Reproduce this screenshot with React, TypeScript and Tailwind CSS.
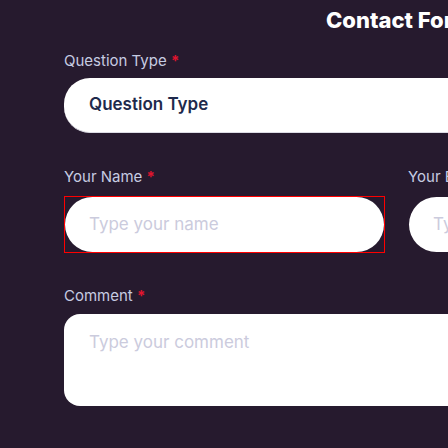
import React from 'react';

const Label: React.FC<{ text: string }> = ({ text }) => (
  <label className="block h-[20px] text-[15px] leading-5 text-[#c6cce2]">
    {text} <span className="font-bold text-[#e0142e]">*</span>
  </label>
);

const PillInput: React.FC<{ placeholder: string }> = ({ placeholder }) => (
  <div className="h-[55px] rounded-full bg-white flex items-center pl-[24px]">
    <span className="text-[17px] text-[#cbcbdd] whitespace-nowrap">{placeholder}</span>
  </div>
);

export default function App() {
  return (
    <div className="w-[448px] h-[448px] overflow-hidden bg-[#261a2e] font-['Inter',sans-serif]">
      <div className="w-[900px] pl-[64px]">
        <div className="h-[51px] pl-[262px] pt-[8px]">
          <h1 className="text-[22px] leading-[25px] font-extrabold text-white whitespace-nowrap">
            Contact Form
          </h1>
        </div>

        <div>
          <Label text="Question Type" />
          <div className="mt-[7px] h-[55px] rounded-[26px] bg-white border-b border-[#dcdce4] flex items-center pl-[25px]">
            <span className="text-[17px] font-semibold text-[#1e2a4c]">Question Type</span>
          </div>
        </div>

        <div className="mt-[34px] flex gap-[23px]">
          <div className="w-[321px]">
            <Label text="Your Name" />
            <div className="mt-[9px] border border-[#ff0000]">
              <PillInput placeholder="Type your name" />
            </div>
          </div>
          <div className="w-[321px]">
            <Label text="Your Email" />
            <div className="mt-[9px] border border-transparent">
              <PillInput placeholder="Type your email" />
            </div>
          </div>
        </div>

        <div className="mt-[33px]">
          <Label text="Comment" />
          <div className="mt-[8px] h-[92px] rounded-[16px] bg-white pl-[25px] pt-[16px]">
            <span className="text-[17px] text-[#cbcbdd]">Type your comment</span>
          </div>
        </div>
      </div>
    </div>
  );
}
